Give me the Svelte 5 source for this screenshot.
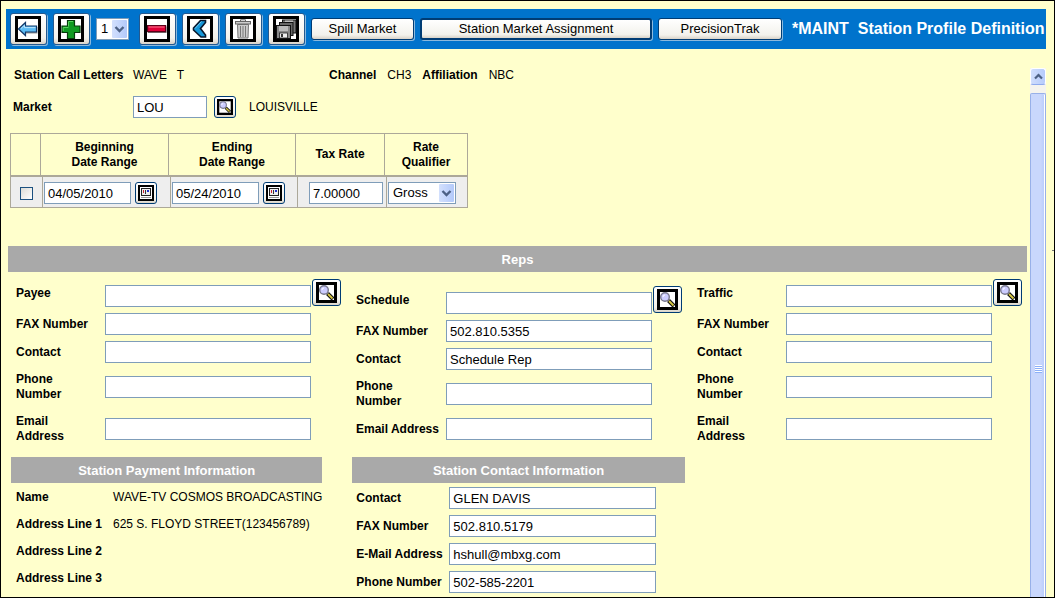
<script>
  let page = $state('1');
  let qualifier = $state('Gross');

  const reps = [
    {
      id: 'payee', title: 'Payee',
      rows: [['FAX Number', ''], ['Contact', ''], ['Phone Number', ''], ['Email Address', '']]
    },
    {
      id: 'schedule', title: 'Schedule', wide: true,
      rows: [['FAX Number', '502.810.5355'], ['Contact', 'Schedule Rep'], ['Phone Number', ''], ['Email Address', '']]
    },
    {
      id: 'traffic', title: 'Traffic',
      rows: [['FAX Number', ''], ['Contact', ''], ['Phone Number', ''], ['Email Address', '']]
    }
  ];

  const payment = [
    ['Name', 'WAVE-TV COSMOS BROADCASTING'],
    ['Address Line 1', '625 S. FLOYD STREET(123456789)'],
    ['Address Line 2', ''],
    ['Address Line 3', '']
  ];

  const contact = [
    ['Contact', 'GLEN DAVIS'],
    ['FAX Number', '502.810.5179'],
    ['E-Mail Address', 'hshull@mbxg.com'],
    ['Phone Number', '502-585-2201']
  ];
</script>

{#snippet magnifier(size)}
  <svg width={size} height={size} viewBox="0 0 21 21" aria-hidden="true">
    <rect width="21" height="21" fill="#000" />
    <rect x="3" y="3" width="15" height="15" fill="#fff" />
    <path d="M11.5 11.5 L17 17" stroke="#111" stroke-width="4" />
    <path d="M12 12 L16.5 16.5" stroke="#d8c840" stroke-width="1.8" />
    <circle cx="8" cy="8" r="4.3" fill="#ccccff" stroke="#77778c" stroke-width="1.4" />
    <path d="M6 8 a2 2 0 0 1 2 -2" stroke="#fff" fill="none" />
  </svg>
{/snippet}

{#snippet calendar()}
  <svg width="16" height="16" viewBox="0 0 16 16" aria-hidden="true">
    <rect width="16" height="16" fill="#000" />
    <rect x="2" y="2" width="12" height="12" fill="#fff" />
    <rect x="3.5" y="3.500" width="9" height="7" fill="#eee" stroke="#222" />
    <path d="M5.500 5v2M7.500 5v4" stroke="#333" />
    <path d="M5 5h1v3h-1z" fill="#d02030" />
    <path d="M9 5h2v2h-2z" fill="#2030d0" />
    <path d="M3 12.500h10" stroke="#999" />
  </svg>
{/snippet}

{#snippet chevron()}
  <svg class="chev" width="15" height="18" viewBox="0 0 15 18" aria-hidden="true">
    <path d="M3.5 7 L7.5 11 L11.5 7" fill="none" stroke="#4d6185" stroke-width="2.4" />
  </svg>
{/snippet}

{#snippet glyph(name)}
  <svg width="26" height="26" viewBox="0 0 26 26" aria-hidden="true">
    <rect width="26" height="26" fill="#000" />
    <rect x="3" y="3" width="20" height="20" fill="#fff" />
    {#if name === 'back'}
      <path d="M4 13.8 L11 7.5 V11 H22.5 V17.5 H11 V20.5 Z" fill="#999" />
      <path d="M3.5 13 L10.5 6.5 V10 H21.5 V16 H10.5 V19.5 Z" fill="#5cbcf5" stroke="#12386a" stroke-width="1.2" />
      <path d="M6 12.5 L9.5 9.3 V11.6 H20.5" fill="none" stroke="#b9e5ff" />
    {:else if name === 'add'}
      <path d="M9.5 4.5h7v5.500h5.500v6.500h-5.500v6h-7v-6h-5.500v-6.500h5.500z" fill="#109a22" stroke="#053c0b" stroke-width="1.200" />
      <path d="M10.500 10.500V5.500h4.500M5.200 15v-3.500h5.300" fill="none" stroke="#55cf5c" />
    {:else if name === 'remove'}
      <rect x="4" y="10.500" width="18.500" height="6.500" fill="#777" />
      <rect x="3.600" y="9.600" width="18" height="6" fill="#e00038" stroke="#5d0018" stroke-width="1.200" />
      <path d="M4.500 11h16" stroke="#ff7894" />
    {:else if name === 'previous'}
      <path d="M13.500 4.500 H18.500 V6.500 L13.500 12.500 L18.500 19 V21 H14 L6.500 14 V12 Z" fill="#1596d8" stroke="#08172c" stroke-width="1.600" />
      <path d="M8 12.500 L14.500 5.500" stroke="#71c9f2" />
    {:else if name === 'delete'}
      <path d="M7.500 8.500 H18.500 L18 22 H8 Z" fill="#ccc" stroke="#777" />
      <path d="M10.500 10v11M13 10v11M15.500 10v11" stroke="#777" />
      <rect x="5.500" y="5.500" width="15" height="2.500" fill="#ccc" stroke="#666" />
      <path d="M10.500 5V3.800h5V5" fill="none" stroke="#666" />
    {:else}
      <rect x="9.500" y="4" width="13.500" height="13" fill="#777" stroke="#111" />
      <rect x="12" y="4.500" width="8" height="4" fill="#bbb" />
      <rect x="6.500" y="6.500" width="13.500" height="13" fill="#666" stroke="#111" />
      <rect x="3.500" y="9.500" width="14" height="13" fill="#888" stroke="#111" />
      <rect x="6" y="10" width="9" height="5" fill="#bbb" />
      <rect x="6.500" y="17" width="8" height="5" fill="#eee" stroke="#222" stroke-width=".8" />
      <rect x="8" y="18" width="2" height="3" fill="#333" />
    {/if}
  </svg>
{/snippet}

{#snippet iconButton(name, label)}
  <button type="button" class="tool" aria-label={label}>{@render glyph(name)}</button>
{/snippet}

<div class="page">
  <header class="toolbar">
    {@render iconButton('back', 'Back')}
    {@render iconButton('add', 'Add')}
    <span class="pick count">
      <select aria-label="Rows to add" bind:value={page}>
        <option>1</option>
        <option>2</option>
        <option>3</option>
      </select>
      {@render chevron()}
    </span>
    {@render iconButton('remove', 'Remove')}
    {@render iconButton('previous', 'Previous')}
    {@render iconButton('delete', 'Delete')}
    {@render iconButton('save', 'Save')}
    <button type="button" class="text spill">Spill Market</button>
    <button type="button" class="text assign">Station Market Assignment</button>
    <button type="button" class="text trak">PrecisionTrak</button>
    <h1>*MAINT&nbsp; Station Profile Definition</h1>
  </header>

  <div class="body">
    <main>
      <div class="line">
        <b class="lead">Station Call Letters</b>
        <span class="call">WAVE&nbsp;&nbsp; T</span>
        <b>Channel</b>
        <span>CH3</span>
        <b>Affiliation</b>
        <span>NBC</span>
      </div>
      <div class="line market">
        <label class="lead" for="market">Market</label>
        <input id="market" type="text" value="LOU" />
        <button type="button" class="mini" aria-label="Find market">{@render magnifier(16)}</button>
        <span class="city">LOUISVILLE</span>
      </div>

      <table>
        <thead>
          <tr>
            <th class="c-check"></th>
            <th class="c-begin">Beginning<br />Date Range</th>
            <th class="c-end">Ending<br />Date Range</th>
            <th class="c-tax">Tax Rate</th>
            <th class="c-rate">Rate<br />Qualifier</th>
          </tr>
        </thead>
        <tbody>
          <tr>
            <td><div class="cell check"><input type="checkbox" aria-label="Select row" /></div></td>
            <td>
              <div class="cell">
                <input type="text" aria-label="Beginning date" value="04/05/2010" />
                <button type="button" class="mini" aria-label="Pick beginning date">{@render calendar()}</button>
              </div>
            </td>
            <td>
              <div class="cell">
                <input type="text" aria-label="Ending date" value="05/24/2010" />
                <button type="button" class="mini" aria-label="Pick ending date">{@render calendar()}</button>
              </div>
            </td>
            <td><div class="cell tax"><input type="text" aria-label="Tax rate" value="7.00000" /></div></td>
            <td>
              <div class="cell">
                <span class="pick rate">
                  <select aria-label="Rate qualifier" bind:value={qualifier}>
                    <option>Gross</option>
                    <option>Net</option>
                  </select>
                  {@render chevron()}
                </span>
              </div>
            </td>
          </tr>
        </tbody>
      </table>

      <h2 class="reps-title">Reps</h2>
      <div class="reps">
        {#each reps as rep}
          <section class:wide={rep.wide}>
            <div class="row first">
              <label for={rep.id}>{rep.title}</label>
              <input id={rep.id} type="text" />
              <button type="button" class="find" aria-label="Find {rep.title}">{@render magnifier(21)}</button>
            </div>
            {#each rep.rows as [name, value], i}
              <div class="row" class:tall={i === 2 || (i === 3 && !rep.wide)}>
                <label for="{rep.id}-{i}"><span class:narrow={i === 2 || (i === 3 && !rep.wide)}>{name}</span></label>
                <input id="{rep.id}-{i}" type="text" {value} />
              </div>
            {/each}
          </section>
        {/each}
      </div>

      <div class="info">
        <section>
          <h2>Station Payment Information</h2>
          <dl>
            {#each payment as [name, value]}
              <div><dt>{name}</dt><dd>{value}</dd></div>
            {/each}
          </dl>
        </section>
        <section>
          <h2>Station Contact Information</h2>
          <div class="contact">
            {#each contact as [name, value], i}
              <div class="crow">
                <label for="contact-{i}">{name}</label>
                <input id="contact-{i}" type="text" {value} />
              </div>
            {/each}
          </div>
        </section>
      </div>
    </main>

    <div class="scroll">
      <button type="button" class="up" aria-label="Scroll up">
        <svg width="9" height="7" viewBox="0 0 9 7" aria-hidden="true">
          <path d="M1 5.500 L4.500 2 L8 5.500" fill="none" stroke="#4d6185" stroke-width="2.200" />
        </svg>
      </button>
      <div class="thumb"><i></i></div>
    </div>
  </div>
  <i class="tick"></i>
</div>

<style>
  :global(body) { background: #ffffcc; }
  .page, .page * { box-sizing: border-box; }
  .page {
    position: relative;
    display: flex;
    flex-direction: column;
    min-height: 100vh;
    padding: 8px 8px 0 5px;
    border: 1px solid #000;
    background: #ffffcc;
    color: #000;
    font: 12px/15px "Liberation Sans", Arial, sans-serif;
  }
  button, input, select { font: 13px/16px "Liberation Sans", Arial, sans-serif; color: #000; margin: 0; }
  h1, h2, dl, dd { margin: 0; }
  svg { display: block; flex: none; }
  label, dt, b { font-weight: bold; }

  .toolbar {
    display: flex;
    align-items: center;
    gap: 6px;
    height: 40px;
    padding: 0 0 0 4px;
    background: #0073cc;
  }
  .toolbar h1 {
    margin-left: 4px;
    color: #fff;
    font-size: 16px;
    line-height: 20px;
    white-space: nowrap;
  }
  button {
    display: flex;
    align-items: center;
    justify-content: center;
    flex: none;
    padding: 0;
    border: 1px solid #003c74;
    border-radius: 3px;
    background: linear-gradient(#fff, #f3f2ec 80%, #d9d3c8);
    white-space: nowrap;
  }
  .tool { width: 37px; height: 32px; padding-right: 1px; border-color: #24598f; box-shadow: 1px 1px 0 #8bb9dd; }
  .text { height: 22px; box-shadow: 1px 1px 0 #8bb9dd; }
  .spill { width: 103px; }
  .assign { width: 232px; border-width: 2px; }
  .trak { width: 124px; }
  .count { margin-right: 4px; }
  .count select { border-color: #fff; }

  .pick { position: relative; display: block; }
  .pick select {
    appearance: none;
    display: block;
    height: 22px;
    padding: 0 4px;
    border: 1px solid #7f9db9;
    border-radius: 0;
    background: #fff;
  }
  .count select { width: 33px; }
  .rate select { width: 68px; }
  .chev {
    position: absolute;
    top: 2px;
    right: 2px;
    border-radius: 1px;
    background: linear-gradient(90deg, #d3e0fd, #b3c9fa);
    pointer-events: none;
  }

  .body { display: flex; flex: 1; gap: 3px; padding-left: 2px; }
  main { flex: 1; min-width: 0; padding-top: 15px; }

  .line { display: flex; align-items: center; gap: 11px; height: 22px; padding-left: 6px; white-space: nowrap; }
  .lead { width: 108px; }
  .call { width: 185px; }
  .market { gap: 0; margin-top: 10px; padding-left: 5px; }
  .market .lead { width: 120px; }
  .market input { width: 74px; margin-right: 7px; }
  .city { margin-left: 13px; }

  input[type="text"] {
    height: 22px;
    min-width: 0;
    padding: 1px 2px 0 3px;
    border: 1px solid #7f9db9;
    border-radius: 0;
    background: #fff;
  }
  .mini { width: 22px; height: 22px; }

  table {
    margin: 15px 0 0 2px;
    border-collapse: separate;
    border-spacing: 0;
    border: 1px solid #aca899;
    border-left: 0;
  }
  th {
    height: 42px;
    padding: 0;
    border-left: 1px solid #aca899;
    border-bottom: 1px solid #aca899;
    text-align: center;
  }
  td {
    height: 31px;
    padding: 2px 0 0 4px;
    border-top: 1px solid #aca899;
    background: linear-gradient(#aca899, #aca899) 2px 0 / 1px 100% no-repeat #eee;
  }
  td:first-child { border-left: 1px solid #aca899; background: #eee; }
  .c-check { width: 30px; }
  .c-begin { width: 128px; }
  .c-end { width: 127px; }
  .c-tax { width: 89px; }
  .c-rate { width: 83px; }
  .cell { display: flex; align-items: center; gap: 4px; }
  .cell input[type="text"] { width: 87px; }
  .tax { padding-left: 10px; }
  .cell.tax input[type="text"] { width: 74px; }
  .check { padding-left: 5px; }
  input[type="checkbox"] {
    appearance: none;
    width: 13px;
    height: 13px;
    border: 1px solid #1c5180;
    background: linear-gradient(135deg, #dcdcd7, #fff);
  }
  input[type="checkbox"]:checked { background: #21a121; }

  h2 {
    height: 26px;
    padding-top: 2px;
    background: #a9a9a9;
    color: #fff;
    font-size: 13px;
    line-height: 24px;
    text-align: center;
  }
  .reps-title { margin-top: 38px; }
  .reps { display: grid; grid-template-columns: 340fr 341fr 338fr; align-items: center; }
  .reps section { padding: 0 5px 0 8px; }
  .reps section:first-child { padding-right: 7px; }
  .row { display: grid; grid-template-columns: 89px 1fr 29px; align-items: center; height: 28px; }
  .wide .row { grid-template-columns: 90px 1fr 29px; }
  .reps .wide { padding-right: 7px; }
  .tall { height: 42px; }
  .first { height: 38px; padding: 7px 0 3px; align-items: end; }
  .first label { line-height: 28px; }
  .row input { margin-right: 1px; }
  .narrow { display: block; width: 50px; }
  .find { width: 29px; height: 27px; align-self: start; }

  .info {
    display: grid;
    grid-template-columns: 310fr 333fr 313fr;
    gap: 30px;
    margin-top: 7px;
    padding-left: 3px;
  }
  dl { padding: 1px 0 0 5px; }
  dl div { display: grid; grid-template-columns: 97px 1fr; align-items: center; height: 27px; white-space: nowrap; }
  .contact { padding: 1px 29px 0 4px; }
  .crow { display: grid; grid-template-columns: 93px 1fr; align-items: center; height: 28px; white-space: nowrap; }

  .scroll {
    display: flex;
    flex-direction: column;
    gap: 8px;
    width: 16px;
    margin-top: 19px;
    background: #f5f4ee;
  }
  .up { width: 16px; height: 17px; border: 1px solid #fff; border-bottom-color: #8fabef; background: linear-gradient(90deg, #d0defd, #b6cbfb); }
  .thumb {
    display: flex;
    flex: 1;
    flex-direction: column;
    align-items: center;
    border: 1px solid #98b0e8;
    border-bottom: 0;
    border-radius: 2px 2px 0 0;
    background: linear-gradient(90deg, #c9d7fc 70%, #b5cbfd);
    box-shadow: inset -1px 0 0 #fff;
  }
  .thumb::before { content: ""; flex: 272; }
  .thumb::after { content: ""; flex: 224; }
  .thumb i { width: 7px; height: 8px; background: repeating-linear-gradient(#fff 0 1px, #8cb0f8 1px 2px); }
  .tick { position: absolute; top: 249px; right: 0; width: 2px; height: 1px; background: #777; }
</style>
